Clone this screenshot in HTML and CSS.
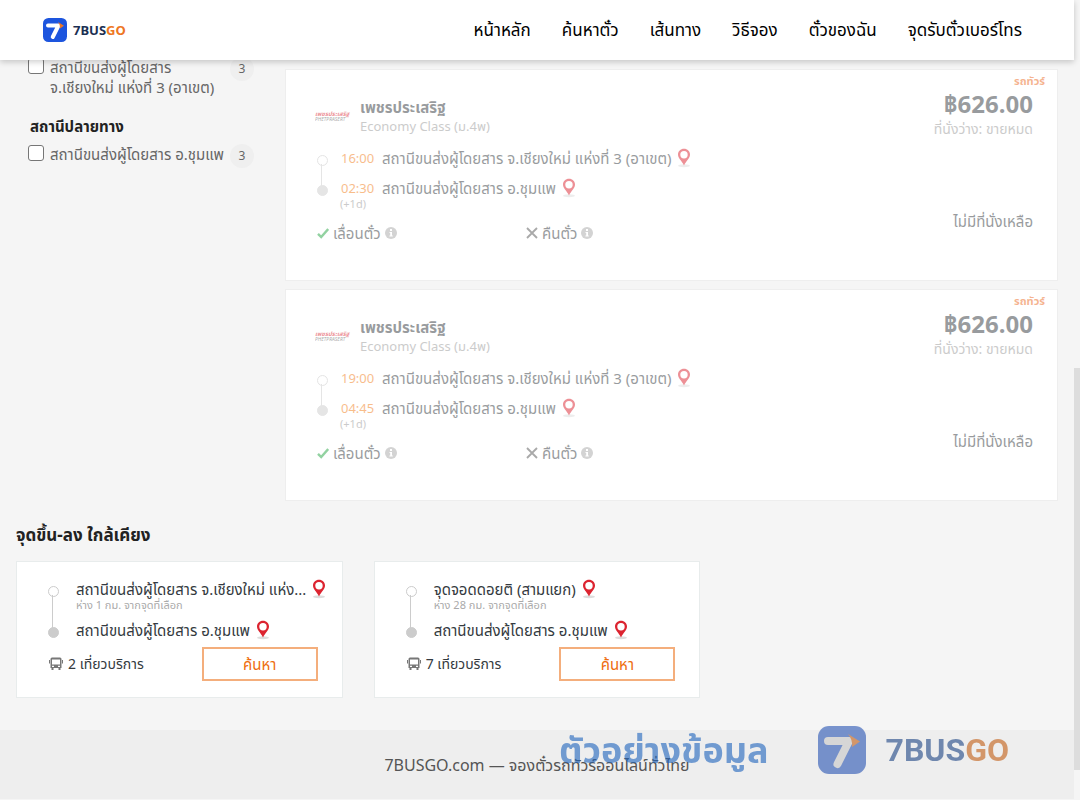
FILE: index.html
```
<!DOCTYPE html>
<html lang="th">
<head>
    <meta charset="UTF-8">
    <meta name="viewport" content="width=device-width, initial-scale=1.0">
    <title>7BUSGO</title>
    <link rel="stylesheet" href="styles.css">
</head>
<body>

<!-- shared icons -->
<svg class="sprite" aria-hidden="true">
    <symbol id="logo" viewBox="0 0 48 48">
        <rect class="logo-tile" width="48" height="48" rx="11"/>
        <path class="logo-seven" d="M10 15H31L19.500 38" fill="none" stroke-width="8" stroke-linecap="round" stroke-linejoin="round"/>
        <path class="logo-arrow" d="M30 8L42 15.500L34 21Q35 14 30 8Z"/>
    </symbol>
    <symbol id="pin" viewBox="0 0 14 20">
        <ellipse cx="7" cy="17.800" rx="6" ry="1.500" fill="#ddd"/>
        <path d="M7 0.800C3.600 0.800 1 3.300 1 6.600C1 10.500 5 13 7 17.600C9 13 13 10.500 13 6.600C13 3.300 10.400 0.800 7 0.800Z" fill="#dc2430"/>
        <circle cx="7" cy="6.800" r="3.700" fill="#fff"/>
    </symbol>
    <symbol id="check" viewBox="0 0 12 12">
        <path d="M1 6.800L4.200 10L11.200 2" fill="none" stroke="#28a745" stroke-width="2.400"/>
    </symbol>
    <symbol id="cross" viewBox="0 0 12 12">
        <path d="M1 1L11 11M11 1L1 11" fill="none" stroke="#555" stroke-width="1.800"/>
    </symbol>
    <symbol id="info" viewBox="0 0 12 12">
        <circle cx="6" cy="6" r="6" fill="#a8a8a8"/>
        <path d="M5 2H7V4H5ZM4.500 5H7V8.500H7.800V9.600H4.400V8.500H5.200V6H4.500Z" fill="#fff"/>
    </symbol>
    <symbol id="bus" viewBox="0 0 14 14">
        <path d="M3 0.500H11Q12.500 0.500 12.500 2V11H11.500V13H9.500V11H4.500V13H2.500V11H1.500V2Q1.500 0.500 3 0.500ZM3 2.500V7.500H11V2.500ZM3 8.700V9.900H5V8.700ZM9 8.700V9.900H11V8.700Z" fill="#777" fill-rule="evenodd"/>
        <path d="M0.500 3V6.500M13.500 3V6.500" stroke="#777"/>
    </symbol>
</svg>

<header class="header">
    <a class="brand" href="#">
        <svg class="brand-logo"><use href="#logo"/></svg>
        <span>7BUS<span class="brand-go">GO</span></span>
    </a>
    <nav class="nav">
        <a href="#">หน้าหลัก</a>
        <a href="#">ค้นหาตั๋ว</a>
        <a href="#">เส้นทาง</a>
        <a href="#">วิธีจอง</a>
        <a href="#">ตั๋วของฉัน</a>
        <a href="#">จุดรับตั๋วเบอร์โทร</a>
    </nav>
</header>

<div class="page">
    <div class="content">
        <aside class="filters">
            <div class="filter-row">
                <input type="checkbox" id="origin">
                <label for="origin">สถานีขนส่งผู้โดยสาร จ.เชียงใหม่ แห่งที่ 3 (อาเขต)</label>
                <span class="count">3</span>
            </div>
            <h3>สถานีปลายทาง</h3>
            <div class="filter-row">
                <input type="checkbox" id="destination">
                <label for="destination">สถานีขนส่งผู้โดยสาร อ.ชุมแพ</label>
                <span class="count">3</span>
            </div>
        </aside>

        <main class="trips">
            <article class="trip">
                <div class="trip-info">
                    <div class="operator">
                        <div class="operator-logo" aria-hidden="true"><b>เพชรประเสริฐ</b><i>PHETPRASERT</i></div>
                        <div>
                            <h2>เพชรประเสริฐ</h2>
                            <p class="class-name">Economy Class (ม.4พ)</p>
                        </div>
                    </div>
                    <ul class="route">
                        <li><span class="time">16:00</span>สถานีขนส่งผู้โดยสาร จ.เชียงใหม่ แห่งที่ 3 (อาเขต)<svg class="pin"><use href="#pin"/></svg></li>
                        <li><span class="time">02:30</span>สถานีขนส่งผู้โดยสาร อ.ชุมแพ<svg class="pin"><use href="#pin"/></svg></li>
                    </ul>
                    <p class="day">(+1d)</p>
                    <div class="policies">
                        <span><svg class="icon"><use href="#check"/></svg>เลื่อนตั๋ว<svg class="icon"><use href="#info"/></svg></span>
                        <span><svg class="icon"><use href="#cross"/></svg>คืนตั๋ว<svg class="icon"><use href="#info"/></svg></span>
                    </div>
                </div>
                <div class="trip-price">
                    <span class="tag">รถทัวร์</span>
                    <strong class="price">฿626.00</strong>
                    <span class="seats">ที่นั่งว่าง: ขายหมด</span>
                    <span class="sold-out">ไม่มีที่นั่งเหลือ</span>
                </div>
            </article>

            <article class="trip">
                <div class="trip-info">
                    <div class="operator">
                        <div class="operator-logo" aria-hidden="true"><b>เพชรประเสริฐ</b><i>PHETPRASERT</i></div>
                        <div>
                            <h2>เพชรประเสริฐ</h2>
                            <p class="class-name">Economy Class (ม.4พ)</p>
                        </div>
                    </div>
                    <ul class="route">
                        <li><span class="time">19:00</span>สถานีขนส่งผู้โดยสาร จ.เชียงใหม่ แห่งที่ 3 (อาเขต)<svg class="pin"><use href="#pin"/></svg></li>
                        <li><span class="time">04:45</span>สถานีขนส่งผู้โดยสาร อ.ชุมแพ<svg class="pin"><use href="#pin"/></svg></li>
                    </ul>
                    <p class="day">(+1d)</p>
                    <div class="policies">
                        <span><svg class="icon"><use href="#check"/></svg>เลื่อนตั๋ว<svg class="icon"><use href="#info"/></svg></span>
                        <span><svg class="icon"><use href="#cross"/></svg>คืนตั๋ว<svg class="icon"><use href="#info"/></svg></span>
                    </div>
                </div>
                <div class="trip-price">
                    <span class="tag">รถทัวร์</span>
                    <strong class="price">฿626.00</strong>
                    <span class="seats">ที่นั่งว่าง: ขายหมด</span>
                    <span class="sold-out">ไม่มีที่นั่งเหลือ</span>
                </div>
            </article>
        </main>
    </div>

    <section class="nearby">
        <h2>จุดขึ้น-ลง ใกล้เคียง</h2>
        <div class="nearby-list">
            <article class="stop-card">
                <ul class="route route-nearby">
                    <li>
                        <div class="stop"><span class="stop-name">สถานีขนส่งผู้โดยสาร จ.เชียงใหม่ แห่ง...</span><svg class="pin"><use href="#pin"/></svg></div>
                        <small>ห่าง 1 กม. จากจุดที่เลือก</small>
                    </li>
                    <li><div class="stop"><span class="stop-name">สถานีขนส่งผู้โดยสาร อ.ชุมแพ</span><svg class="pin"><use href="#pin"/></svg></div></li>
                </ul>
                <div class="stop-footer">
                    <span class="services"><svg class="bus"><use href="#bus"/></svg>2 เที่ยวบริการ</span>
                    <button type="button">ค้นหา</button>
                </div>
            </article>
            <article class="stop-card">
                <ul class="route route-nearby">
                    <li>
                        <div class="stop"><span class="stop-name">จุดจอดดอยติ (สามแยก)</span><svg class="pin"><use href="#pin"/></svg></div>
                        <small>ห่าง 28 กม. จากจุดที่เลือก</small>
                    </li>
                    <li><div class="stop"><span class="stop-name">สถานีขนส่งผู้โดยสาร อ.ชุมแพ</span><svg class="pin"><use href="#pin"/></svg></div></li>
                </ul>
                <div class="stop-footer">
                    <span class="services"><svg class="bus"><use href="#bus"/></svg>7 เที่ยวบริการ</span>
                    <button type="button">ค้นหา</button>
                </div>
            </article>
        </div>
    </section>

    <footer class="footer">7BUSGO.com — จองตั๋วรถทัวร์ออนไลน์ทั่วไทย</footer>
</div>

<div class="scrollbar"></div>

<div class="watermark">
    <span class="sample">ตัวอย่างข้อมูล</span>
    <svg class="watermark-logo"><use href="#logo"/></svg>
    <span class="watermark-name">7BUS<span class="brand-go">GO</span></span>
</div>

</body>
</html>
```
FILE: styles.css
```
* {
    margin: 0;
    padding: 0;
    box-sizing: border-box;
}
body {
    --tile: #1d55de;
    --seven: #fff;
    --orange: #ee7623;
    font-family: 'Noto Sans', 'Noto Sans Thai', sans-serif;
    font-size: 15px;
    line-height: 20px;
    color: #343a40;
    background: #f5f5f5;
}
a {
    color: inherit;
    text-decoration: none;
}
ul {
    list-style: none;
}
.sprite {
    display: none;
}
.logo-tile {
    fill: var(--tile);
}
.logo-seven {
    stroke: var(--seven);
}
.logo-arrow {
    fill: var(--orange);
}
.header {
    position: sticky;
    top: 0;
    z-index: 10;
    display: flex;
    justify-content: space-between;
    align-items: center;
    height: 60px;
    margin-right: 6px;
    padding: 0 52px 0 43px;
    background: #fff;
    box-shadow: 0 2px 6px rgba(0, 0, 0, 0.2);
}
.brand {
    display: flex;
    align-items: center;
    gap: 6px;
    font-size: 13px;
    font-weight: 700;
    color: #1b2f52;
}
.brand-logo {
    width: 24px;
    height: 24px;
}
.brand-go {
    color: var(--orange);
}
.nav {
    display: flex;
    gap: 31px;
    font-size: 17px;
    color: #000;
}
.page {
    margin-right: 6px;
}
.content {
    display: flex;
    align-items: flex-start;
    padding-right: 16px;
}

/* filters */
.filters {
    width: 285px;
    padding: 0 31px 0 28px;
    color: #666;
}
.filters h3 {
    margin: 19px 2px 11px;
    font-size: 15px;
    color: #222;
}
.filter-row {
    display: flex;
    align-items: flex-start;
    gap: 6px;
}
.filter-row input {
    appearance: none;
    flex: none;
    width: 16px;
    height: 16px;
    margin-top: -2px;
    border: 1px solid #767676;
    border-radius: 3px;
    background: #fff;
}
.filter-row label {
    flex: 1;
    margin-top: -3px;
}
.count {
    width: 24px;
    margin-top: -3px;
    border-radius: 12px;
    font-size: 12px;
    line-height: 24px;
    text-align: center;
    background: #efefef;
}

/* trips */
.trips {
    flex: 1;
    display: flex;
    flex-direction: column;
    gap: 8px;
    padding-top: 9px;
}
.trip {
    display: flex;
    justify-content: space-between;
    min-height: 212px;
    border: 1px solid #eee;
    background: #fff;
}
.trip-info {
    flex: 1;
    padding: 27px 0 0 29px;
    opacity: 0.5;
}
.operator {
    display: flex;
    align-items: center;
    gap: 9px;
}
.operator h2 {
    font-size: 15px;
    line-height: 20px;
}
.operator-logo {
    width: 36px;
    overflow: hidden;
    font-size: 6px;
    line-height: 6px;
    font-style: italic;
    white-space: nowrap;
    color: #dc2430;
}
.operator-logo b,
.operator-logo i {
    display: block;
}
.operator-logo i {
    font-size: 5px;
    line-height: 5px;
    color: #555;
}
.class-name {
    font-size: 13px;
    line-height: 18px;
    color: #999;
}
.route {
    margin-top: 13px;
}
.route li {
    position: relative;
    display: flex;
    align-items: center;
    height: 20px;
    padding-left: 26px;
    white-space: nowrap;
}
.route li + li {
    margin-top: 10px;
}
.route li::before {
    content: "";
    position: absolute;
    left: 2px;
    top: 7px;
    width: 9px;
    height: 9px;
    border: 1px solid #ccc;
    border-radius: 50%;
    background: #fff;
}
.route li:last-child::before {
    background: #ccc;
}
.route li:first-child::after {
    content: "";
    position: absolute;
    left: 6px;
    top: 16px;
    width: 1px;
    height: 22px;
    background: #ccc;
}
.time {
    width: 41px;
    font-size: 13px;
    color: #f27d16;
}
.pin {
    flex: none;
    width: 14px;
    height: 20px;
    margin-left: 6px;
}
.day {
    padding-left: 25px;
    font-size: 11px;
    line-height: 12px;
    color: #999;
}
.policies {
    display: grid;
    grid-template-columns: 209px 1fr;
    margin-top: 13px;
    padding-left: 2px;
}
.policies span {
    display: flex;
    align-items: center;
    gap: 4px;
}
.icon {
    width: 12px;
    height: 12px;
}
.trip-price {
    display: flex;
    flex-direction: column;
    align-items: flex-end;
    padding: 4px 24px 0 0;
    text-align: right;
}
.trip-price > * {
    opacity: 0.5;
}
.tag {
    margin-right: -12px;
    font-size: 11px;
    line-height: 14px;
    font-weight: 700;
    color: #ed6c1f;
}
.price {
    font-size: 24px;
    line-height: 32px;
}
.seats {
    font-size: 14px;
    line-height: 18px;
    color: #999;
}
.sold-out {
    margin-top: 73px;
}

/* nearby stops */
.nearby {
    padding: 24px 16px 32px;
}
.nearby h2 {
    margin-bottom: 16px;
    font-size: 17px;
    line-height: 20px;
    color: #222;
}
.nearby-list {
    display: grid;
    grid-template-columns: repeat(3, 1fr);
    gap: 31px;
}
.stop-card {
    min-width: 0;
    padding: 17px 15px 16px 32px;
    border: 1px solid #e8ecec;
    background: #fff;
}
.route-nearby {
    margin-top: 0;
}
.route-nearby li {
    display: block;
    height: auto;
    padding-left: 27px;
}
.route-nearby li + li {
    margin-top: 9px;
}
.route-nearby li::before {
    left: -1px;
}
.route-nearby li:first-child::after {
    left: 3px;
    height: 33px;
}
.stop {
    display: flex;
    align-items: center;
}
.route small {
    display: block;
    font-size: 11px;
    line-height: 12px;
    color: #aaa;
}
.stop-footer {
    display: flex;
    justify-content: space-between;
    align-items: center;
    margin-top: 7px;
    padding-right: 9px;
}
.services {
    display: flex;
    align-items: center;
    gap: 5px;
    font-size: 14px;
}
.bus {
    width: 14px;
    height: 14px;
}
.stop-footer button {
    width: 116px;
    height: 34px;
    border: 2px solid #f4ae7c;
    font: inherit;
    color: #ee6c0c;
    background: #fff;
}
.footer {
    padding: 25px 0 24px;
    font-size: 16px;
    text-align: center;
    color: #555;
    background: #eee;
}

/* overlays */
.scrollbar {
    position: fixed;
    right: 0;
    top: 368px;
    width: 6px;
    height: 402px;
    background: #ddd;
}
.watermark {
    --tile: #2552b2;
    --seven: #c6c6c6;
    --orange: #c15c12;
    position: fixed;
    right: 71px;
    bottom: 26px;
    z-index: 20;
    display: flex;
    align-items: center;
    opacity: 0.6;
    line-height: 48px;
    font-weight: 700;
    color: #1c4484;
}
.sample {
    margin-right: 49px;
    font-size: 36px;
    color: #1d63bd;
}
.watermark-logo {
    width: 48px;
    height: 48px;
    margin-right: 20px;
}
.watermark-name {
    font-family: Roboto, sans-serif;
    font-size: 32px;
}
```
